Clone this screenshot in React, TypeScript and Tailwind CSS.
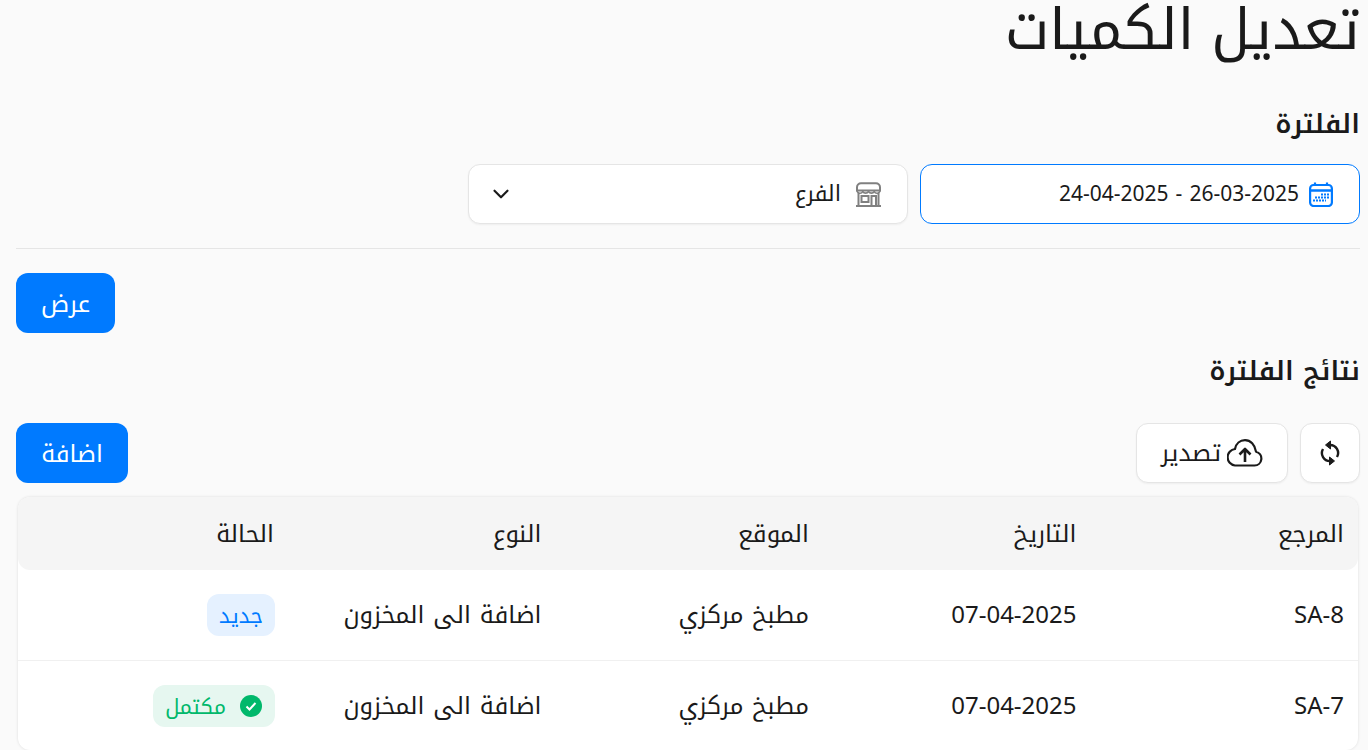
import React from "react";
import { ChevronDown } from "lucide-react";

const font = "font-['Noto_Sans','Noto_Kufi_Arabic','DejaVu_Sans',sans-serif] [word-spacing:0.16em]";

const rows = [
  { ref: "SA-8", date: "07-04-2025", status: "new" },
  { ref: "SA-7", date: "07-04-2025", status: "done" },
];

const tableCols = "grid-cols-[repeat(4,267.5px)_1fr]";

function CalendarIcon() {
  return (
    <svg width="24" height="25" viewBox="0 0 24 25" fill="none" stroke="#007aff" strokeWidth="2.2">
      <rect x="1.100" y="3" width="21.800" height="21" rx="3.500" />
      <path d="M1 8.500h22" strokeWidth="2.500" />
      <path d="M6 0.500v3M18 0.500v3" />
      <path d="M12 12.500h8M6 15.500h14M4 18.500h13" strokeWidth="2" strokeDasharray="2 1" />
    </svg>
  );
}

function StoreIcon() {
  return (
    <svg width="27" height="25" viewBox="0 0 27 25" fill="none" stroke="#808080" strokeWidth="2">
      <path d="M6 1.200h15a4 4 0 0 1 4 4v3.300h-23v-3.300a4 4 0 0 1 4-4z" />
      <path d="M2 8.500a3 3 0 0 0 5.700 1 3.400 3.400 0 0 0 5.800 0 3.400 3.400 0 0 0 5.800 0 3 3 0 0 0 5.700-1" strokeWidth="1.600" />
      <path d="M3.500 11v13M23.500 11v13M1 24h25" />
      <rect x="6.500" y="14" width="7" height="6" />
      <path d="M16.500 24v-10h4.500v10" />
    </svg>
  );
}

function SyncIcon() {
  return (
    <svg width="20" height="26" viewBox="0 0 20 26" fill="none" stroke="#1a1a1a" strokeWidth="2.400">
      <path d="M10 5a8 8 0 0 1 7 12" />
      <path d="M10 21a8 8 0 0 1-7-12" />
      <path d="M10.500 1L5.500 5l5 4z" fill="#1a1a1a" strokeWidth="1" />
      <path d="M9.500 17l5 4-5 4z" fill="#1a1a1a" strokeWidth="1" />
    </svg>
  );
}

function CloudIcon() {
  return (
    <svg width="36" height="28" viewBox="0 0 36 28" fill="none" stroke="#1a1a1a" strokeWidth="2.200" strokeLinejoin="round">
      <path d="M8 26.500h19.500a7 7 0 0 0 1.500-13.800C28 5.500 23.500 1.200 18 1.200 13 1.200 9 4.500 8 10a8.300 8.300 0 0 0 0 16.500z" />
      <path d="M18 23V10M12.500 15.500l5.500-5.500 5.500 5.500" strokeWidth="2.600" />
    </svg>
  );
}

function App() {
  return (
    <div dir="rtl" className={`h-[750px] overflow-hidden bg-[#fafafa] pl-4 pr-2 text-[#1a1a1a] ${font}`}>
      <h1 className="text-[57px] font-normal leading-[54px] text-[#1a1a1a]">تعديل الكميات</h1>

      <h2 className="mt-[51px] text-[26.5px] font-semibold leading-9">الفلترة</h2>

      <div className="mt-[23px] grid grid-cols-3 gap-3">
        <div className="flex h-[60px] items-center gap-[10px] rounded-xl border border-[#007aff] bg-white pr-[26px] text-[21px]">
          <CalendarIcon />
          <span dir="ltr" className="flex gap-[7px]">
            <span>24-04-2025</span>
            <span>-</span>
            <span>26-03-2025</span>
          </span>
        </div>
        <div className="flex h-[60px] items-center gap-[14px] rounded-xl border border-[#e5e5e5] bg-white pl-[19px] pr-[25px] text-[22px] shadow-xs">
          <StoreIcon />
          <span className="-mt-1">الفرع</span>
          <ChevronDown className="mr-auto h-[26px] w-[26px] text-[#1a1a1a]" strokeWidth={2} />
        </div>
      </div>

      <div className="mt-6 border-t border-[#e5e5e5]" />

      <div className="mt-6 flex justify-end">
        <button className="h-[60px] w-[99px] rounded-xl bg-[#007aff] text-2xl text-white">عرض</button>
      </div>

      <h2 className="mt-[19px] text-[26.5px] font-semibold leading-9">نتائج الفلترة</h2>

      <div className="mt-[35px] flex items-center gap-3">
        <button className="flex h-[60px] w-[60px] items-center justify-center rounded-xl border border-[#e5e5e5] bg-white shadow-xs">
          <SyncIcon />
        </button>
        <button className="flex h-[60px] w-[152px] items-center justify-center gap-[6px] rounded-xl border border-[#e5e5e5] bg-white text-2xl shadow-xs">
          <CloudIcon />
          <span className="-mt-[3px]">تصدير</span>
        </button>
        <button className="mr-auto h-[60px] w-[112px] rounded-xl bg-[#007aff] text-2xl text-white">اضافة</button>
      </div>

      <div className="mx-[2px] mt-[14px] rounded-xl bg-white shadow-[0_0_3px_rgba(0,0,0,0.12)]">
        <div className={`grid h-[73px] ${tableCols} items-center rounded-xl bg-[#f5f5f5] pb-[2px] text-2xl`}>
          {["المرجع", "التاريخ", "الموقع", "النوع", "الحالة"].map((h) => (
            <div key={h} className="pr-[14px]">
              {h}
            </div>
          ))}
        </div>
        {rows.map((r, i) => (
          <div
            key={r.ref}
            className={`grid h-[90px] ${tableCols} items-center pb-[2px] text-2xl ${i > 0 ? "border-t border-[#f0f0f0]" : ""}`}
          >
            <div className="pr-[14px]">{r.ref}</div>
            <div className="pr-[14px]">{r.date}</div>
            <div className="pr-[14px]">مطبخ مركزي</div>
            <div className="pr-[14px]">اضافة الى المخزون</div>
            <div className="mt-[2px] pr-[13px]">
              {r.status === "new" ? (
                <span className="inline-flex h-[42px] items-center rounded-xl bg-[#e5f1ff] px-3 text-[21px] text-[#007aff]">
                  جديد
                </span>
              ) : (
                <span className="inline-flex h-[42px] items-center gap-[14px] rounded-xl bg-[#e6f7f0] pl-3 pr-[13px] text-[21px] text-[#00b86b]">
                  <svg width="22" height="22" viewBox="0 0 22 22">
                    <circle cx="11" cy="11" r="11" fill="#00b86b" />
                    <path d="M6.500 11.500l3 3 6-6.500" fill="none" stroke="#fff" strokeWidth="2" />
                  </svg>
                  مكتمل
                </span>
              )}
            </div>
          </div>
        ))}
      </div>
    </div>
  );
}

export default App;
